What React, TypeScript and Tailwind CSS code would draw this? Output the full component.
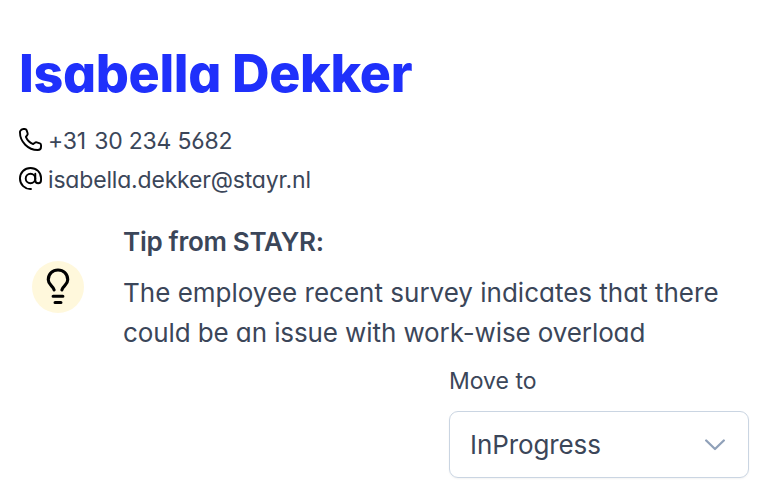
import React from "react";

type IconProps = { className?: string };

const PhoneIcon = ({ className }: IconProps) => (
  <svg viewBox="0 0 24 24" fill="none" stroke="currentColor" strokeWidth="2" strokeLinejoin="round" className={className}>
    <path d="M1.200 3.200C2 1.600 3 1 4.500 1H6C7 1 7.600 1.400 7.900 2.200L9 5.500C9.200 6.200 9.100 6.800 8.600 7.400L7.200 9.200C8.500 12.500 11.500 15.500 14.800 16.800L16.600 15.400C17.200 14.900 17.800 14.800 18.500 15L21.800 16.100C22.600 16.400 23 17 23 18V19.500C23 21.500 21.500 23 19.500 23C9.500 23 1 14.500 1 4.500C1 4 1 3.600 1.200 3.200Z" />
  </svg>
);

const AtIcon = ({ className }: IconProps) => (
  <svg viewBox="0 0 24 24" fill="none" stroke="currentColor" strokeWidth="2" strokeLinecap="round" className={className}>
    <path d="M12.500 23C6 23.200 1 18.200 1 12S5.800 1 12 1S23 5.500 23 11.500V13.500C23 15.800 21.800 17 20 17S17 15.800 17 13.500V7" />
    <circle cx="12" cy="12" r="5" />
  </svg>
);

const BulbIcon = ({ className }: IconProps) => (
  <svg viewBox="0 0 24 38" fill="none" stroke="currentColor" strokeWidth="3.2" strokeLinecap="round" className={className}>
    <path d="M8 22.500C7 18.500 2 17.500 2 12C2 6 6.500 2 12 2S22 6 22 12C22 17.500 17 18.500 16 22.500" />
    <path d="M7 29H17M9 35.500H15" />
  </svg>
);

const Contact = ({ icon, children }: { icon: React.ReactNode; children: React.ReactNode }) => (
  <div className="flex h-[39px] items-center gap-[6px] text-[23px] whitespace-nowrap">
    {icon}
    {children}
  </div>
);

const App = () => {
  return (
    <div className="h-screen w-screen overflow-hidden bg-white pt-[43px] pl-[19px] font-['Inter',sans-serif] text-[#3b4659] [font-feature-settings:'cv02','cv03','cv04','cv11']">
      <h1 className="h-[79px] text-[52px] leading-[62px] font-extrabold tracking-[-0.36px] whitespace-nowrap text-[#1f30fb]">Isabella Dekker</h1>
      <Contact icon={<PhoneIcon className="mb-[4px] size-[23px] text-black" />}>
        <span className="tracking-[-0.2px]">
          <span className="mr-[2px]">+31</span> 30 234 5682
        </span>
      </Contact>
      <Contact icon={<AtIcon className="mb-[4px] size-[23px] text-black" />}>
        <span className="tracking-[-0.18px]">isabella.dekker@stayr.nl</span>
      </Contact>
      <div className="mt-[22px] flex items-center">
        <div className="mb-[2px] ml-[13px] flex size-[52px] items-center justify-center rounded-full bg-[#fff8dc]">
          <BulbIcon className="h-[37px] w-6 text-black" />
        </div>
        <div className="ml-[39px] w-[620px] text-[26px]">
          <p className="h-[51px] leading-[40px] font-[570] tracking-[-0.28px]">Tip from STAYR:</p>
          <p className="leading-[40px]">
            The employee recent survey indicates that there
            <br />
            <span className="tracking-[-0.1px]">could be an issue with work-wise overload</span>
          </p>
        </div>
      </div>
      <div className="ml-[430px] w-[300px]">
        <div className="h-[58px] text-[23px] leading-[56px]">Move to</div>
        <button className="flex h-[67px] w-full items-center justify-between rounded-[9px] border border-slate-300 px-5 text-[26px] tracking-[-0.1px] shadow-xs">
          InProgress
          <svg viewBox="0 0 20 12" fill="none" stroke="currentColor" strokeWidth="2.3" strokeLinecap="round" strokeLinejoin="round" className="mr-[3px] h-3 w-5 text-slate-400">
            <path d="M1.200 1.500L10 10L18.800 1.500" />
          </svg>
        </button>
      </div>
    </div>
  );
};

export default App;
